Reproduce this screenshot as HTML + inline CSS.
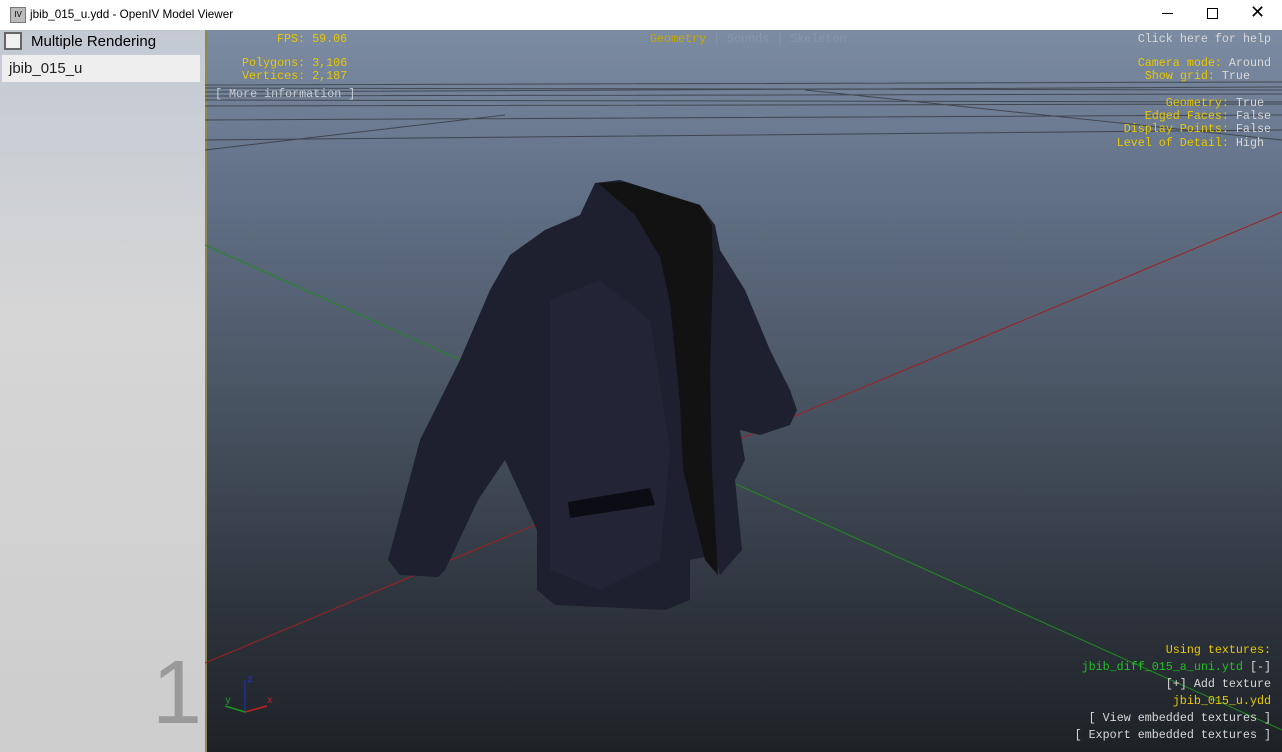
<!DOCTYPE html>
<html><head><style>
body{margin:0;width:1282px;height:752px;overflow:hidden;background:#fff;font-family:"Liberation Sans",sans-serif;position:relative}
.tb{position:absolute;left:0;top:0;width:1282px;height:30px;background:#fff;font-size:12px}
.left{position:absolute;left:0;top:30px;width:205px;height:722px;background:linear-gradient(#c3c9d3,#d6d6d6 40%,#cdcdcd)}
.vp{position:absolute;left:205px;top:30px;width:1077px;height:722px;background:linear-gradient(#7c8ca2 0%,#64738a 20%,#4a5564 50%,#2e343d 80%,#1e2227 100%);border-left:2px solid #8a8a50;box-sizing:border-box}
.m{position:absolute;font-family:"Liberation Mono",monospace;font-size:11.7px;white-space:pre;line-height:13px}
.y{color:#e8c800}.w{color:#d8d8d8}.g{color:#22c022}
</style></head><body>
<div class="tb">
<div style="position:absolute;left:10px;top:7px;width:14px;height:14px;background:#bbb;border:1px solid #777;font-size:8px;text-align:center;line-height:14px">IV</div>
<div style="position:absolute;left:30px;top:8px;color:#000;font-size:11.7px">jbib_015_u.ydd - OpenIV Model Viewer</div>
<div style="position:absolute;left:1162px;top:13px;width:11px;height:1px;background:#000"></div>
<div style="position:absolute;left:1207px;top:8px;width:9px;height:9px;border:1px solid #000"></div>
<div style="position:absolute;left:1250px;top:2px;font-size:18px">✕</div>
</div>
<div class="left">
<div style="position:absolute;left:4px;top:2px;width:18px;height:18px;border:2px solid #666;background:#f0f0f0;box-sizing:border-box"></div>
<div style="position:absolute;left:31px;top:3px;font-size:15px;color:#000">Multiple Rendering</div>
<div style="position:absolute;left:2px;top:25px;width:198px;height:27px;background:#eeeeee"></div>
<div style="position:absolute;left:9px;top:30px;font-size:15px;color:#222">jbib_015_u</div>
<div style="position:absolute;left:152px;top:612px;font-size:90px;color:#9a9a9a;font-weight:300">1</div>
</div>
<div class="vp">
<svg width="1077" height="722" style="position:absolute;left:-2px;top:0">
<g stroke="#222" stroke-width="1" opacity="0.6" fill="none">
<path d="M0,55 L1077,52 M0,58 L1077,60 M0,62 L1077,57 M0,66 L1077,64 M0,70 L1077,72 M0,76 L1077,74 M0,90 L1077,85 M0,110 L1077,100 M0,120 L300,85 M600,60 L1077,110"/>
</g>
<line x1="0" y1="633" x2="1077" y2="182" stroke="#a02020" stroke-width="1"/>
<line x1="0" y1="215" x2="1077" y2="700" stroke="#1f8a1f" stroke-width="1"/>
<g transform="translate(-205,-30)">
<path d="M595,183 L620,180 L700,205 L715,225 L720,250 L745,290 L770,350 L790,390 L797,410 L790,425 L760,435 L740,430 L745,460 L735,480 L742,550 L720,575 L715,555 L690,560 L690,600 L665,610 L555,605 L537,590 L537,530 L505,460 L478,500 L445,570 L438,577 L400,575 L388,560 L420,440 L460,360 L490,290 L510,255 L545,230 L580,215 Z" fill="#1e2030"/>
<path d="M550,300 L600,280 L650,320 L670,450 L660,560 L600,590 L550,570 Z" fill="#252839" opacity="0.7"/>
<path d="M598,183 L625,182 L700,205 L712,225 L713,270 L710,370 L712,470 L718,575 L705,560 L695,520 L688,490 L683,470 L680,403 L670,303 L660,257 L635,215 Z" fill="#121212"/>
<path d="M568,502 L650,488 L655,505 L570,518 Z" fill="#0c0d14"/>
</g>
<line x1="40" y1="682" x2="40" y2="650" stroke="#1a2ad0"/>
<line x1="40" y1="682" x2="20" y2="676" stroke="#1a9a1a" stroke-width="1.5"/>
<line x1="40" y1="682" x2="62" y2="676" stroke="#c02020" stroke-width="1.5"/>
<text x="42" y="652" fill="#2030d0" font-size="10" font-family="Liberation Mono">z</text>
<text x="20" y="673" fill="#20a020" font-size="10" font-family="Liberation Mono">y</text>
<text x="62" y="673" fill="#c02020" font-size="10" font-family="Liberation Mono">x</text>
</svg>
</div>
<div class="m y" style="left:277px;top:33px">FPS: 59.06</div>
<div class="m y" style="left:242px;top:57px">Polygons: 3,106</div>
<div class="m y" style="left:242px;top:70px">Vertices: 2,187</div>
<div class="m w" style="left:215px;top:88px;color:#c8ccd4">[ More information ]</div>
<div class="m" style="left:650px;top:33px"><span class="y" style="color:#c8a800">Geometry</span><span style="color:#8a96a8"> | Sounds | Skeleton</span></div>
<div class="m w" style="right:11px;top:33px">Click here for help</div>
<div class="m" style="right:11px;top:57px"><span class="y">Camera mode:</span><span class="w"> Around</span></div>
<div class="m" style="right:11px;top:70px"><span class="y">Show grid:</span><span class="w"> True   </span></div>
<div class="m" style="right:11px;top:97px"><span class="y">Geometry:</span><span class="w"> True </span></div>
<div class="m" style="right:11px;top:110px"><span class="y">Edged Faces:</span><span class="w"> False</span></div>
<div class="m" style="right:11px;top:123px"><span class="y">Display Points:</span><span class="w"> False</span></div>
<div class="m" style="right:11px;top:137px"><span class="y">Level of Detail:</span><span class="w"> High </span></div>
<div class="m y" style="right:11px;top:644px">Using textures:</div>
<div class="m" style="right:11px;top:661px"><span class="g">jbib_diff_015_a_uni.ytd</span><span class="w"> [-]</span></div>
<div class="m w" style="right:11px;top:678px">[+] Add texture</div>
<div class="m y" style="right:11px;top:695px">jbib_015_u.ydd</div>
<div class="m w" style="right:11px;top:712px">[ View embedded textures ]</div>
<div class="m w" style="right:11px;top:729px">[ Export embedded textures ]</div>
</body></html>
